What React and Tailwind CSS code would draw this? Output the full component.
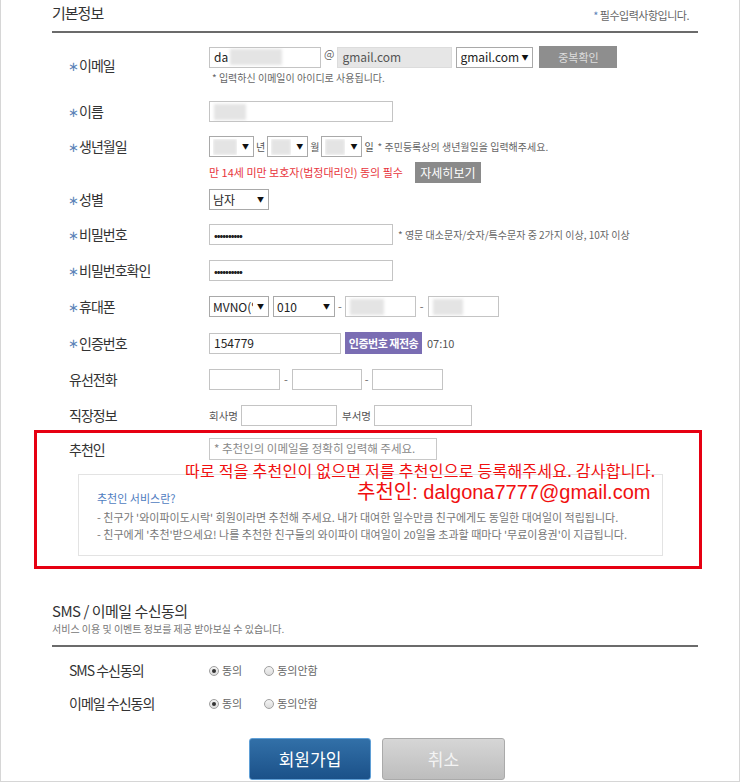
import React from "react";

const Star = () => <span className="text-[#5b83b8] mr-[1px] text-[13px]">∗</span>;

function Label({ children, req, className = "" }) {
  return (
    <div className={"w-[157px] shrink-0 pl-[16px] flex items-center text-[14px] tracking-[-1px] text-[#333] " + className}>
      {req && <Star />}
      <span>{children}</span>
    </div>
  );
}

function Box({ w, gray, children, className = "" }) {
  return (
    <div
      className={
        "h-[21px] border flex items-center px-[4px] overflow-hidden whitespace-nowrap text-[12px] " +
        (gray ? "bg-[#e6e6e6] border-[#dcdcdc] text-[#555] " : "bg-white border-[#c4c4c4] text-[#222] ") +
        w +
        " " +
        className
      }
    >
      {children}
    </div>
  );
}

function Sel({ w, children, className = "" }) {
  return (
    <div className={"h-[21px] border border-[#a9a9a9] bg-white flex items-center justify-between pl-[3px] pr-[4px] overflow-hidden whitespace-nowrap text-[12px] text-[#222] " + w + " " + className}>
      <div className="flex items-center overflow-hidden">{children}</div>
      <span className="text-[7px] text-[#111] shrink-0 ml-[2px]">▼</span>
    </div>
  );
}

const Blur = ({ w }) => <div className={"h-[16px] bg-[#e4e4e4] blur-[1.5px] " + w} />;

const Hint = ({ children, className = "" }) => (
  <span className={"text-[10px] text-[#666] " + className}>{children}</span>
);

function Radio({ checked, label }) {
  return (
    <div className="flex items-center gap-[3px]">
      <span className="w-[10px] h-[10px] rounded-full border border-[#a0a0a0] bg-linear-to-b from-[#f4f4f4] to-[#dcdcdc] flex items-center justify-center">
        {checked && <span className="w-[4px] h-[4px] rounded-full bg-[#333]" />}
      </span>
      <span className="text-[11px] text-[#666]">{label}</span>
    </div>
  );
}

export default function App() {
  return (
    <div className="w-[740px] h-[782px] bg-white border-x border-b border-[#d6d6d6] font-[Noto_Sans_CJK_KR,sans-serif] text-[#333]">
      <div className="ml-[51px] w-[646px]">
        {/* header */}
        <div className="flex justify-between items-start h-[33px] border-b-2 border-[#6b6b6b] pt-[3px]">
          <div className="text-[15px] leading-[20px] tracking-[-1px] text-[#333]">기본정보</div>
          <div className="text-[11px] leading-[16px] text-[#666] mr-[9px] mt-[4px] tracking-[-0.5px]">
            <span className="text-[#5b83b8]">*</span> 필수입력사항입니다.
          </div>
        </div>

        {/* email */}
        <div className="flex mt-[13px]">
          <Label req>이메일</Label>
          <div className="flex flex-col">
            <div className="flex items-center">
              <Box w="w-[112px]" className="pl-[4px]">
                <span>da</span>
                <div className="ml-[2px]"><Blur w="w-[52px]" /></div>
              </Box>
              <span className="text-[11px] text-[#666] self-start leading-[14px] mx-[3px]">@</span>
              <Box w="w-[115px]" gray>gmail.com</Box>
              <div className="ml-[4px]"><Sel w="w-[77px]" className="text-[11.5px]">gmail.com</Sel></div>
              <div className="ml-[6px] h-[22px] w-[78px] bg-[#8e8e8e] text-[#dedede] text-[11px] flex items-center justify-center">중복확인</div>
            </div>
            <Hint className="mt-[3px] leading-[14px] ml-[3px] text-[10.5px]">* 입력하신 이메일이 아이디로 사용됩니다.</Hint>
          </div>
        </div>

        {/* name */}
        <div className="flex mt-[16px]">
          <Label req>이름</Label>
          <Box w="w-[184px]" className="px-[2px]"><Blur w="w-[32px]" /></Box>
        </div>

        {/* birth */}
        <div className="flex mt-[14px]">
          <Label req>생년월일</Label>
          <div className="flex items-center text-[10px] text-[#555]">
            <Sel w="w-[45px]"><Blur w="w-[24px]" /></Sel>
            <span className="mx-[2px]">년</span>
            <Sel w="w-[41px]"><Blur w="w-[20px]" /></Sel>
            <span className="mx-[2px]">월</span>
            <Sel w="w-[41px]"><Blur w="w-[20px]" /></Sel>
            <span className="ml-[2px] mr-[4px]">일</span>
            <Hint>* 주민등록상의 생년월일을 입력해주세요.</Hint>
          </div>
        </div>
        <div className="flex mt-[5px]">
          <div className="w-[157px] shrink-0" />
          <div className="flex items-center">
            <span className="text-[11px] text-[#e8343c]">만 14세 미만 보호자(법정대리인) 동의 필수</span>
            <div className="ml-[12px] h-[21px] w-[66px] bg-[#8a8a8a] text-white text-[12px] flex items-center justify-center">자세히보기</div>
          </div>
        </div>

        {/* gender */}
        <div className="flex mt-[6px]">
          <Label req>성별</Label>
          <Sel w="w-[60px]">남자</Sel>
        </div>

        {/* password */}
        <div className="flex mt-[14px]">
          <Label req>비밀번호</Label>
          <div className="flex items-center">
            <Box w="w-[184px]"><span className="text-[10px] tracking-[-1px] font-bold">••••••••••</span></Box>
            <Hint className="ml-[5px]">* 영문 대소문자/숫자/특수문자 중 2가지 이상, 10자 이상</Hint>
          </div>
        </div>

        <div className="flex mt-[15px]">
          <Label req>비밀번호확인</Label>
          <Box w="w-[184px]"><span className="text-[10px] tracking-[-1px] font-bold">••••••••••</span></Box>
        </div>

        {/* phone */}
        <div className="flex mt-[15px]">
          <Label req>휴대폰</Label>
          <div className="flex items-center text-[11px] text-[#666]">
            <Sel w="w-[60px]"><span className="block w-[40px] overflow-hidden text-clip">MVNO(알</span></Sel>
            <div className="ml-[4px]"><Sel w="w-[62px]">010</Sel></div>
            <span className="mx-[3px]">-</span>
            <Box w="w-[71px]" className="px-[2px]"><Blur w="w-[34px]" /></Box>
            <span className="mx-[4px]">-</span>
            <Box w="w-[71px]" className="px-[2px]"><Blur w="w-[30px]" /></Box>
          </div>
        </div>

        {/* auth */}
        <div className="flex mt-[15px]">
          <Label req>인증번호</Label>
          <div className="flex items-center">
            <Box w="w-[132px]" className="text-[11px]">154779</Box>
            <div className="ml-[4px] h-[22px] w-[77px] bg-[#7a6db3] text-white text-[11px] font-bold flex items-center justify-center tracking-[-0.5px]">인증번호 재전송</div>
            <span className="ml-[5px] text-[11px] text-[#555]">07:10</span>
          </div>
        </div>

        {/* tel */}
        <div className="flex mt-[15px]">
          <Label className="pl-[17px]">유선전화</Label>
          <div className="flex items-center text-[11px] text-[#666]">
            <Box w="w-[71px]" />
            <span className="mx-[4px]">-</span>
            <Box w="w-[70px]" />
            <span className="mx-[3px]">-</span>
            <Box w="w-[71px]" />
          </div>
        </div>

        {/* work */}
        <div className="flex mt-[15px]">
          <Label className="pl-[17px]">직장정보</Label>
          <div className="flex items-center text-[10.5px] text-[#555]">
            <span className="mr-[3px]">회사명</span>
            <Box w="w-[96px]" />
            <span className="ml-[5px] mr-[3px]">부서명</span>
            <Box w="w-[98px]" />
          </div>
        </div>

        {/* recommender */}
        <div className="relative -ml-[18px] w-[668px] border-[3px] border-[#e60012] mt-[4px] pt-[5px] pb-[10px]">
          <div className="flex">
            <div className="w-[172px] shrink-0 pl-[32px] flex items-center text-[14px] tracking-[-1px] text-[#333]">추천인</div>
            <div className="h-[22px] w-[228px] border border-[#c8c8c8] flex items-center px-[4px]">
              <span className="text-[11.5px] text-[#888] whitespace-nowrap">* 추천인의 이메일을 정확히 입력해 주세요.</span>
            </div>
          </div>
          <div className="ml-[41px] w-[585px] h-[82px] mt-[14px] border border-[#e3e3e3] pt-[16px] pl-[18px]">
            <div className="text-[11px] leading-[14px] text-[#4f7cc0]">추천인 서비스란?</div>
            <div className="mt-[4px] text-[11px] leading-[17px] text-[#777] whitespace-nowrap">
              <div>- 친구가 '와이파이도시락' 회원이라면 추천해 주세요. 내가 대여한 일수만큼 친구에게도 동일한 대여일이 적립됩니다.</div>
              <div>- 친구에게 '추천'받으세요! 나를 추천한 친구들의 와이파이 대여일이 20일을 초과할 때마다 '무료이용권'이 지급됩니다.</div>
            </div>
          </div>
          <div className="absolute left-[148px] top-[27px] text-[16px] leading-[20px] tracking-[0.25px] text-[#f01010] whitespace-nowrap">
            따로 적을 추천인이 없으면 저를 추천인으로 등록해주세요. 감사합니다.
          </div>
          <div className="absolute left-[320px] top-[46px] text-[20px] leading-[26px] text-[#f01010] whitespace-nowrap font-[Liberation_Sans,Noto_Sans_CJK_KR,sans-serif]">
            추천인: dalgona7777@gmail.com
          </div>
        </div>

        {/* SMS */}
        <div className="mt-[32px] border-b-2 border-[#6b6b6b] pb-[9px]">
          <div className="text-[15px] leading-[20px] tracking-[-0.5px] text-[#333]">SMS / 이메일 수신동의</div>
          <div className="mt-[1px] text-[10px] leading-[14px] text-[#777]">서비스 이용 및 이벤트 정보를 제공 받아보실 수 있습니다.</div>
        </div>

        <div className="flex mt-[13px] h-[21px]">
          <Label className="pl-[17px] tracking-[-0.5px]">SMS 수신동의</Label>
          <div className="flex items-center gap-[22px]">
            <Radio checked label="동의" />
            <Radio label="동의안함" />
          </div>
        </div>
        <div className="flex mt-[12px] h-[21px]">
          <Label className="pl-[17px] tracking-[-0.5px]">이메일 수신동의</Label>
          <div className="flex items-center gap-[22px]">
            <Radio checked label="동의" />
            <Radio label="동의안함" />
          </div>
        </div>

        {/* buttons */}
        <div className="flex ml-[197px] mt-[24px] gap-[11px]">
          <div className="w-[122px] h-[42px] rounded-[3px] border border-[#5f9fd6] bg-linear-to-b from-[#3270a8] to-[#1b5189] text-white text-[17px] flex items-center justify-center">회원가입</div>
          <div className="w-[123px] h-[42px] rounded-[3px] border border-[#aaaaaa] bg-linear-to-b from-[#d6d6d6] to-[#bdbdbd] text-[#f4f4f4] text-[17px] flex items-center justify-center">취소</div>
        </div>
      </div>
    </div>
  );
}
